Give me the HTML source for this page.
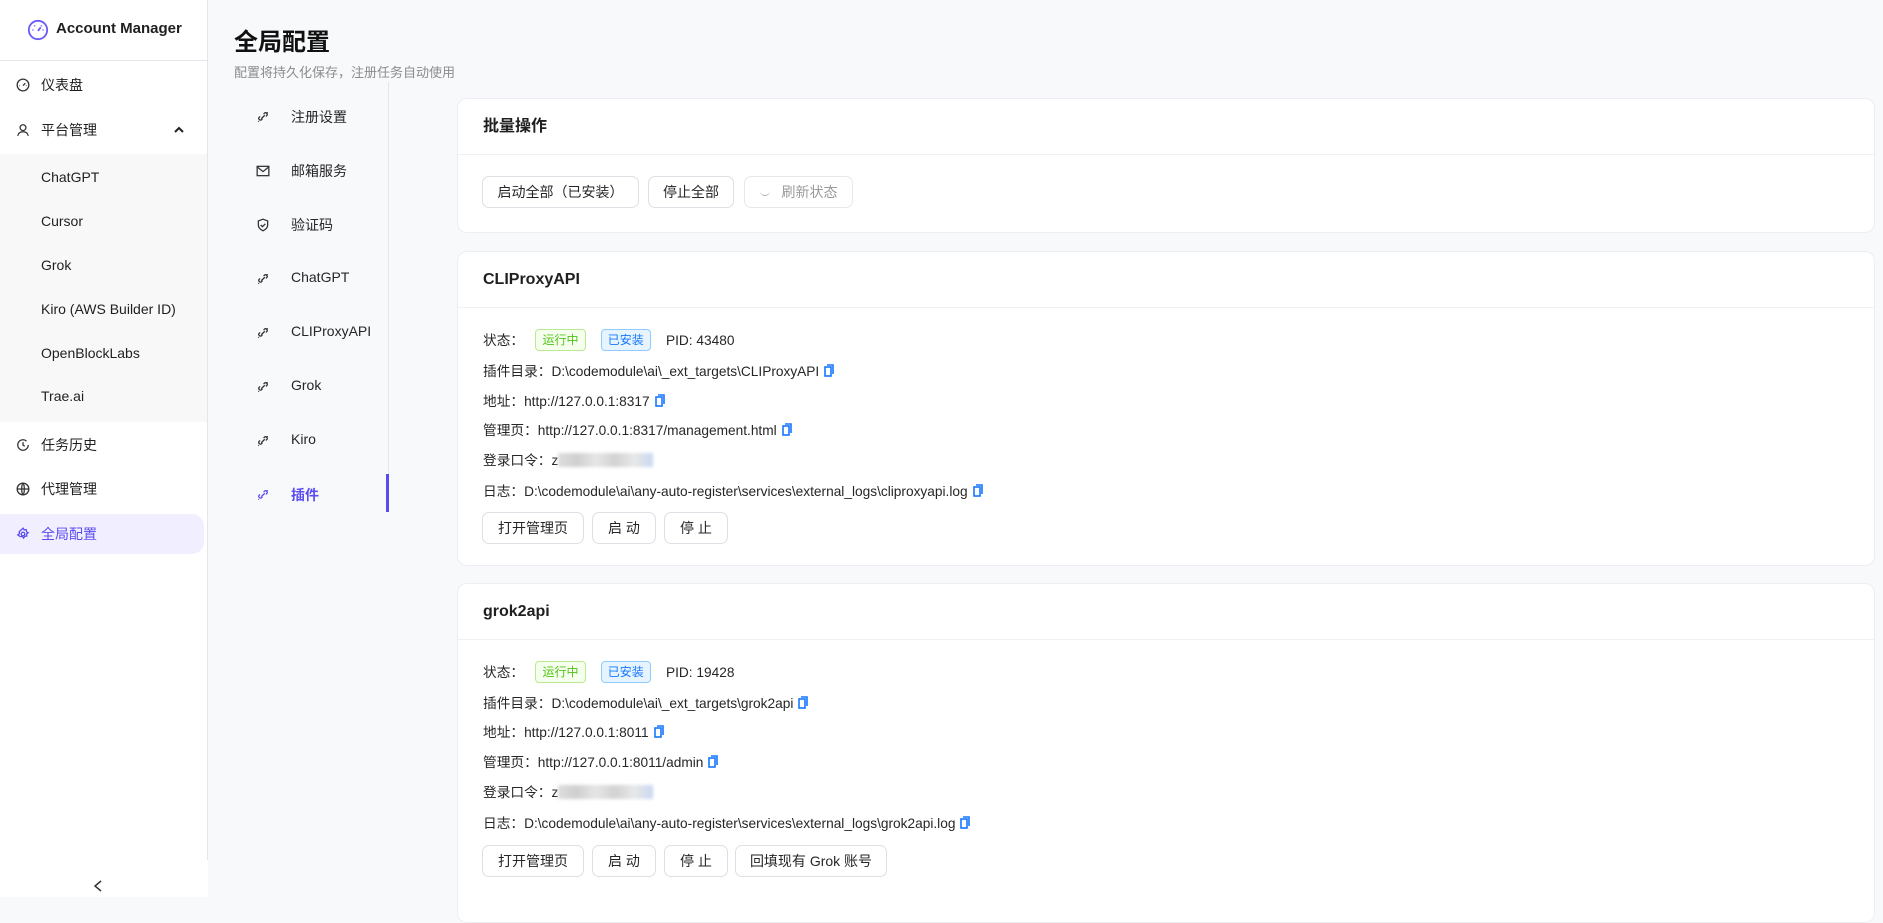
<!DOCTYPE html>
<html><head><meta charset="utf-8"><style>
*{box-sizing:border-box;margin:0;padding:0}
body{width:1883px;height:897px;overflow:hidden;background:#f8f9fb;font-family:"Liberation Sans","Noto Sans CJK SC",sans-serif;color:#1f1f1f;font-size:14px;position:relative}
.abs{position:absolute}
#side{left:0;top:0;width:208px;height:897px;background:#fff}
#side .bd{position:absolute;right:0;top:0;width:1px;height:860px;background:#e5e6eb}
.logo{position:absolute;left:0;top:0;width:207px;height:61px;border-bottom:1px solid #e5e6eb}
.logo span{position:absolute;left:56px;top:20px;font-size:15px;font-weight:600;color:#1f1f1f}
.mi{position:absolute;left:0;width:207px;height:40px;line-height:40px;font-size:14px}
.mi .t{position:absolute;left:41px}
.mi svg{position:absolute;left:16px;top:13px}
.sub{position:absolute;left:0;top:154px;width:207px;height:268px;background:#f8f8f9}
.si{position:absolute;left:41px;font-size:14px}
.sel{position:absolute;left:0;top:514px;width:204px;height:40px;background:#f1efff;border-radius:0 12px 12px 0}
h1{position:absolute;left:234px;top:22px;font-size:24px;font-weight:700;color:#111}
.subt{position:absolute;left:234px;top:62px;font-size:13px;color:#8c8c8c}
.tabline{position:absolute;left:388px;top:82px;width:1px;height:430px;background:#e5e6eb}
.tab{position:absolute;left:262px;font-size:14px;color:#262626}
.tab svg{position:absolute;left:-6px;top:3px}
.tab .t{position:absolute;left:29px;white-space:nowrap;top:0}
.card{position:absolute;left:457px;width:1418px;background:#fff;border:1px solid #eceef2;border-radius:10px}
.ch{height:56px;border-bottom:1px solid #eef0f3;padding:0 25px;line-height:56px;font-size:16px;font-weight:600}
.btn{position:absolute;height:32px;border:1px solid #dcdfe4;border-radius:7px;background:#fff;font-size:14px;line-height:30px;text-align:center;color:#262626}
.row{position:absolute;left:25px;font-size:13.7px;white-space:nowrap;height:30px;line-height:30px;color:#262626}
.badge{display:inline-block;height:22px;line-height:20px;padding:0 6px;font-size:12px;border-radius:4px;vertical-align:middle;margin-top:-3px}
.g{background:#f6ffed;border:1px solid #b7eb8f;color:#52c41a}
.b{background:#e6f4ff;border:1px solid #91caff;color:#1677ff}
.cp{display:inline-block;vertical-align:middle;margin-left:5px;margin-top:-3px}
.blur{display:inline-block;vertical-align:middle;width:95px;height:14px;background:linear-gradient(90deg,#ddd,#cfcfcf 20%,#e6e6e6 40%,#d2d2d2 60%,#e8e8e8 80%,#c9d8f2);filter:blur(1.5px);margin-top:-3px}
</style></head><body>
<div id="side" class="abs">
<div class="bd"></div>
<div class="logo">
<svg class="abs" style="left:27px;top:19px" width="22" height="22" viewBox="0 0 24 24" fill="none" stroke="#6b5cf6" stroke-width="2"><circle cx="12" cy="12" r="10"/><path d="M12 13l3-4M6 12h1M17 12h1M8 7l.7.7M16 7l-.7.7"/></svg>
<span>Account Manager</span></div>
<div class="mi" style="top:65px"><svg width="14" height="14" viewBox="0 0 24 24" fill="none" stroke="#333" stroke-width="2.2"><circle cx="12" cy="12" r="10"/><path d="M12 13l4-4M6 13h1M17 13h1"/></svg><span class="t">仪表盘</span></div>
<div class="mi" style="top:110px"><svg width="14" height="14" viewBox="0 0 24 24" fill="none" stroke="#333" stroke-width="2.2"><circle cx="12" cy="8" r="5"/><path d="M3 22c1-5 5-7 9-7s8 2 9 7"/></svg><span class="t">平台管理</span><svg style="left:174px;top:16px" width="10" height="8" viewBox="0 0 10 8" fill="none" stroke="#222" stroke-width="2"><path d="M1 6l4-4 4 4"/></svg></div>
<div class="sub">
<div class="si" style="top:15px">ChatGPT</div>
<div class="si" style="top:59px">Cursor</div>
<div class="si" style="top:103px">Grok</div>
<div class="si" style="top:147px">Kiro (AWS Builder ID)</div>
<div class="si" style="top:191px">OpenBlockLabs</div>
<div class="si" style="top:234px">Trae.ai</div>
</div>
<div class="mi" style="top:425px"><svg width="14" height="14" viewBox="0 0 24 24" fill="none" stroke="#333" stroke-width="2.2"><path d="M21 12a9 9 0 1 1-3-6.7"/><path d="M12 7v5l3 2"/></svg><span class="t">任务历史</span></div>
<div class="mi" style="top:469px"><svg width="14" height="14" viewBox="0 0 24 24" fill="none" stroke="#333" stroke-width="2.2"><circle cx="12" cy="12" r="10"/><path d="M2 12h20M12 2c3 3 3 17 0 20M12 2c-3 3-3 17 0 20"/></svg><span class="t">代理管理</span></div>
<div class="sel"></div>
<div class="mi" style="top:514px;color:#5b4cf0"><svg width="14" height="14" viewBox="0 0 24 24" fill="none" stroke="#5b4cf0" stroke-width="2.2"><circle cx="12" cy="12" r="3"/><path d="M12 2l2 3 3.5-.5.5 3.5 3 2-3 2 .5 3.5-3.5.5-2 3-2-3-3.5.5L6 15.5l-3-2 3-2-.5-3.5L9 5z"/></svg><span class="t">全局配置</span></div>
<svg class="abs" style="left:94px;top:880px" width="8" height="12" viewBox="0 0 8 12" fill="none" stroke="#333" stroke-width="1.5"><path d="M7 1L1 6l6 5"/></svg>
</div>

<h1>全局配置</h1>
<div class="subt">配置将持久化保存，注册任务自动使用</div>
<div class="tabline"></div>
<div class="abs" style="left:386px;top:474px;width:3px;height:38px;background:#5b4cf0"></div>

<div class="tab" style="top:107px"><svg width="14" height="14" viewBox="0 0 24 24" fill="none" stroke="#333" stroke-width="2.2"><path d="M9 15l6-6M5 19l-1 1M19 5l1-1M7 11l-2 2a3 3 0 0 0 4 4l2-2M13 7l2-2a3 3 0 0 1 4 4l-2 2"/></svg><span class="t">注册设置</span></div>
<div class="tab" style="top:161px"><svg width="14" height="14" viewBox="0 0 24 24" fill="none" stroke="#333" stroke-width="2.2"><rect x="2" y="4" width="20" height="16"/><path d="M2 5l10 8 10-8"/></svg><span class="t">邮箱服务</span></div>
<div class="tab" style="top:215px"><svg width="14" height="14" viewBox="0 0 24 24" fill="none" stroke="#333" stroke-width="2.2"><path d="M12 2l8 3v7c0 5-4 8-8 10-4-2-8-5-8-10V5z"/><path d="M8 12l3 3 5-5"/></svg><span class="t">验证码</span></div>
<div class="tab" style="top:269px"><svg width="14" height="14" viewBox="0 0 24 24" fill="none" stroke="#333" stroke-width="2.2"><path d="M9 15l6-6M5 19l-1 1M19 5l1-1M7 11l-2 2a3 3 0 0 0 4 4l2-2M13 7l2-2a3 3 0 0 1 4 4l-2 2"/></svg><span class="t">ChatGPT</span></div>
<div class="tab" style="top:323px"><svg width="14" height="14" viewBox="0 0 24 24" fill="none" stroke="#333" stroke-width="2.2"><path d="M9 15l6-6M5 19l-1 1M19 5l1-1M7 11l-2 2a3 3 0 0 0 4 4l2-2M13 7l2-2a3 3 0 0 1 4 4l-2 2"/></svg><span class="t">CLIProxyAPI</span></div>
<div class="tab" style="top:377px"><svg width="14" height="14" viewBox="0 0 24 24" fill="none" stroke="#333" stroke-width="2.2"><path d="M9 15l6-6M5 19l-1 1M19 5l1-1M7 11l-2 2a3 3 0 0 0 4 4l2-2M13 7l2-2a3 3 0 0 1 4 4l-2 2"/></svg><span class="t">Grok</span></div>
<div class="tab" style="top:431px"><svg width="14" height="14" viewBox="0 0 24 24" fill="none" stroke="#333" stroke-width="2.2"><path d="M9 15l6-6M5 19l-1 1M19 5l1-1M7 11l-2 2a3 3 0 0 0 4 4l2-2M13 7l2-2a3 3 0 0 1 4 4l-2 2"/></svg><span class="t">Kiro</span></div>
<div class="tab" style="top:485px;color:#5b4cf0"><svg width="14" height="14" viewBox="0 0 24 24" fill="none" stroke="#5b4cf0" stroke-width="2.2"><path d="M9 15l6-6M5 19l-1 1M19 5l1-1M7 11l-2 2a3 3 0 0 0 4 4l2-2M13 7l2-2a3 3 0 0 1 4 4l-2 2"/></svg><span class="t" style="font-weight:600">插件</span></div>

<div class="card" style="top:98px;height:135px">
<div class="ch">批量操作</div>
<div class="btn" style="left:24px;top:77px;width:157px">启动全部（已安装）</div>
<div class="btn" style="left:190px;top:77px;width:86px">停止全部</div>
<div class="btn" style="left:286px;top:77px;width:109px;color:#9a9a9a;border-color:#e6e8eb"><span style="display:inline-block;width:10px;height:10px;border-bottom:1.5px solid #aaa;border-radius:50%;margin-right:12px;vertical-align:middle;margin-top:-4px"></span>刷新状态</div>
</div>

<div class="card" style="top:251px;height:315px">
<div class="ch">CLIProxyAPI</div>
<div class="row" style="top:74px">状态：&nbsp;&nbsp;&nbsp;<span class="badge g">运行中</span>&nbsp;&nbsp;&nbsp;&nbsp;<span class="badge b">已安装</span>&nbsp;&nbsp;&nbsp;&nbsp;PID: 43480</div>
<div class="row" style="top:105px">插件目录：D:\codemodule\ai\_ext_targets\CLIProxyAPI<svg class="cp" width="10" height="13" viewBox="0 0 10 13" fill="none" stroke="#1677ff" stroke-width="1.6"><rect x="1" y="3" width="6" height="9"/><path d="M3 1h6v9"/></svg></div>
<div class="row" style="top:135px">地址：http://127.0.0.1:8317<svg class="cp" width="10" height="13" viewBox="0 0 10 13" fill="none" stroke="#1677ff" stroke-width="1.6"><rect x="1" y="3" width="6" height="9"/><path d="M3 1h6v9"/></svg></div>
<div class="row" style="top:164px">管理页：http://127.0.0.1:8317/management.html<svg class="cp" width="10" height="13" viewBox="0 0 10 13" fill="none" stroke="#1677ff" stroke-width="1.6"><rect x="1" y="3" width="6" height="9"/><path d="M3 1h6v9"/></svg></div>
<div class="row" style="top:194px">登录口令：z<span class="blur"></span></div>
<div class="row" style="top:225px">日志：D:\codemodule\ai\any-auto-register\services\external_logs\cliproxyapi.log<svg class="cp" width="10" height="13" viewBox="0 0 10 13" fill="none" stroke="#1677ff" stroke-width="1.6"><rect x="1" y="3" width="6" height="9"/><path d="M3 1h6v9"/></svg></div>
<div class="btn" style="left:24px;top:260px;width:102px">打开管理页</div>
<div class="btn" style="left:134px;top:260px;width:64px">启 动</div>
<div class="btn" style="left:206px;top:260px;width:64px">停 止</div>
</div>

<div class="card" style="top:583px;height:340px">
<div class="ch">grok2api</div>
<div class="row" style="top:74px">状态：&nbsp;&nbsp;&nbsp;<span class="badge g">运行中</span>&nbsp;&nbsp;&nbsp;&nbsp;<span class="badge b">已安装</span>&nbsp;&nbsp;&nbsp;&nbsp;PID: 19428</div>
<div class="row" style="top:105px">插件目录：D:\codemodule\ai\_ext_targets\grok2api<svg class="cp" width="10" height="13" viewBox="0 0 10 13" fill="none" stroke="#1677ff" stroke-width="1.6"><rect x="1" y="3" width="6" height="9"/><path d="M3 1h6v9"/></svg></div>
<div class="row" style="top:134px">地址：http://127.0.0.1:8011<svg class="cp" width="10" height="13" viewBox="0 0 10 13" fill="none" stroke="#1677ff" stroke-width="1.6"><rect x="1" y="3" width="6" height="9"/><path d="M3 1h6v9"/></svg></div>
<div class="row" style="top:164px">管理页：http://127.0.0.1:8011/admin<svg class="cp" width="10" height="13" viewBox="0 0 10 13" fill="none" stroke="#1677ff" stroke-width="1.6"><rect x="1" y="3" width="6" height="9"/><path d="M3 1h6v9"/></svg></div>
<div class="row" style="top:194px">登录口令：z<span class="blur"></span></div>
<div class="row" style="top:225px">日志：D:\codemodule\ai\any-auto-register\services\external_logs\grok2api.log<svg class="cp" width="10" height="13" viewBox="0 0 10 13" fill="none" stroke="#1677ff" stroke-width="1.6"><rect x="1" y="3" width="6" height="9"/><path d="M3 1h6v9"/></svg></div>
<div class="btn" style="left:24px;top:261px;width:102px">打开管理页</div>
<div class="btn" style="left:134px;top:261px;width:64px">启 动</div>
<div class="btn" style="left:206px;top:261px;width:64px">停 止</div>
<div class="btn" style="left:277px;top:261px;width:152px">回填现有 Grok 账号</div>
</div>
</body></html>
